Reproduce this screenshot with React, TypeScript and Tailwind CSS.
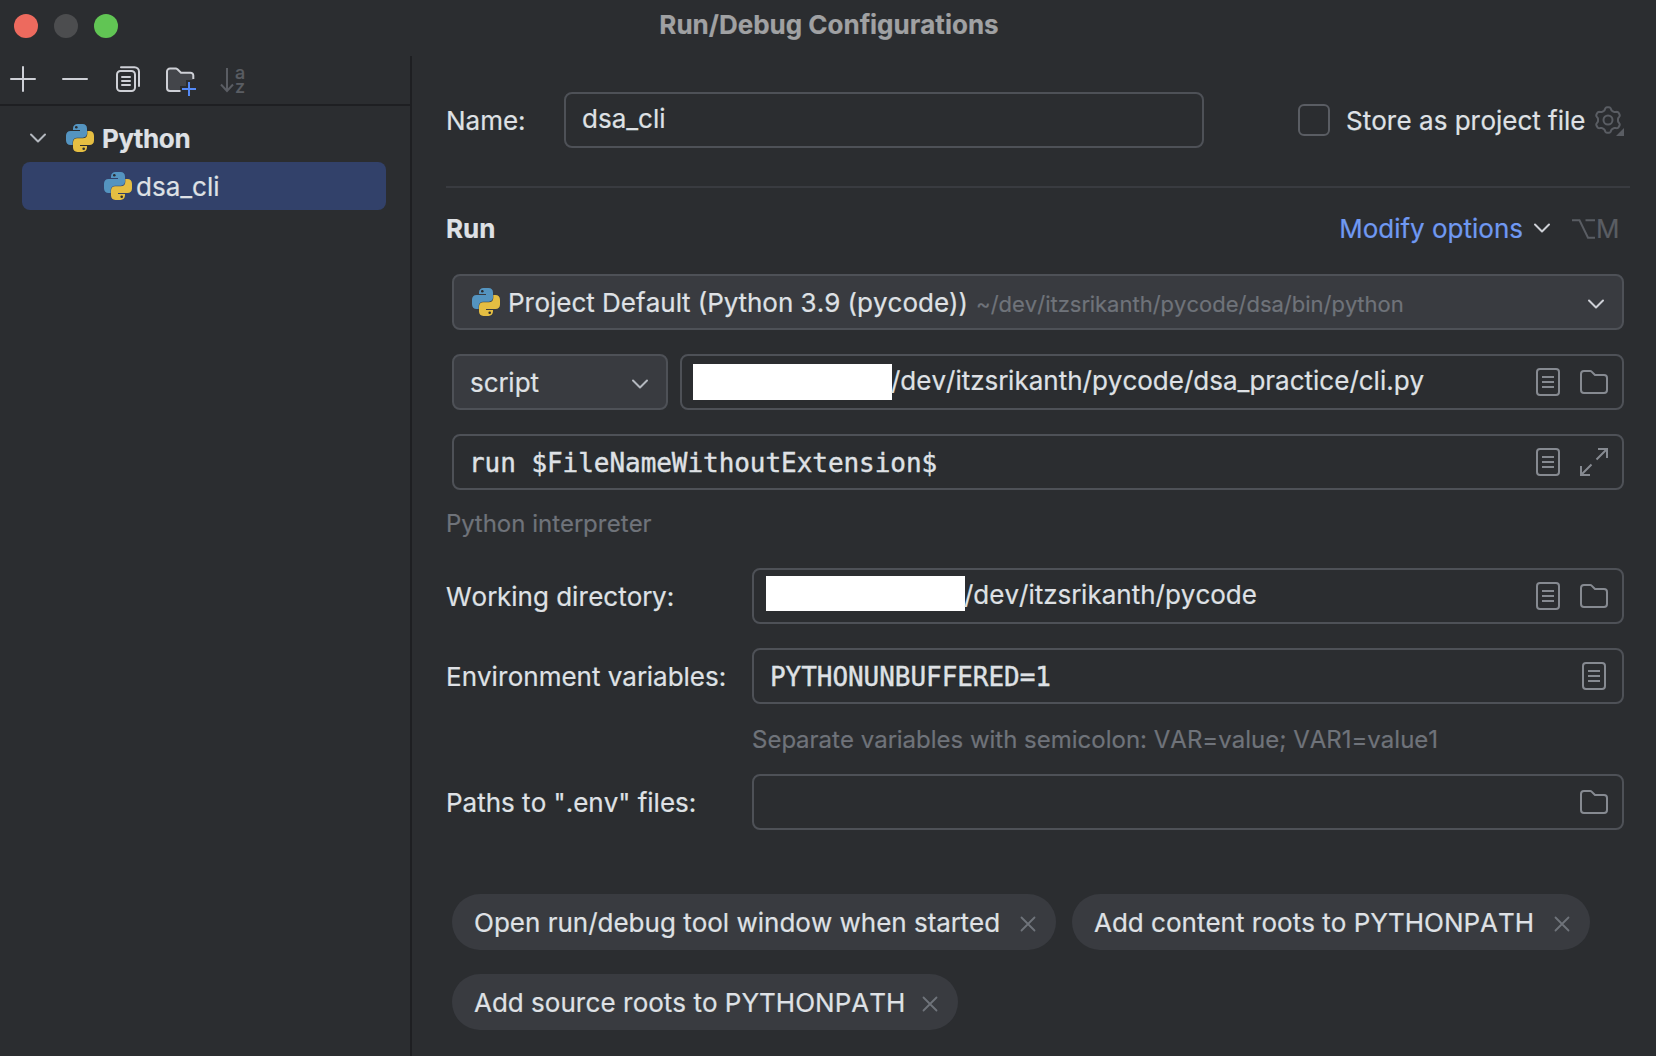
import type { ReactNode } from "react";

function PythonIcon({ className = "" }: { className?: string }) {
  const snake =
    "M7 4.4C7 1.6 9 0 11.4 0h5.2C19.2 0 21 1.8 21 4.4v5.2c0 2.5-1.8 4.1-4.2 4.1h-5.6c-2.7 0-4.5 1.8-4.5 4.4V21H4.6C1.8 21 0 19 0 16.2v-4.6C0 8.8 1.8 7 4.5 7H14V6H7z";
  return (
    <svg width="28" height="28" viewBox="0 0 28 28" className={`shrink-0 ${className}`}>
      <path d={snake} fill="#5494c0" />
      <path d={snake} fill="#e5be42" transform="rotate(180 14 14)" />
      <circle cx="10.3" cy="3.3" r="1.3" fill="#2b2d30" />
      <circle cx="17.7" cy="24.7" r="1.3" fill="#2b2d30" />
    </svg>
  );
}

function Chevron({ color = "#ced0d6", className = "" }: { color?: string; className?: string }) {
  return (
    <svg width="18" height="12" viewBox="0 0 18 12" fill="none" stroke={color} strokeWidth="2" strokeLinecap="round" strokeLinejoin="round" className={`shrink-0 ${className}`}>
      <path d="M2 2.5l7 7 7-7" />
    </svg>
  );
}

function DocIcon() {
  return (
    <svg width="24" height="28" viewBox="0 0 24 28" fill="none" stroke="#868a91" strokeWidth="2" className="shrink-0">
      <rect x="1" y="1" width="22" height="26" rx="3" />
      <path d="M6 9h12M6 14h12M6 19h12" />
    </svg>
  );
}

function FolderIcon() {
  return (
    <svg width="28" height="24" viewBox="0 0 28 24" fill="none" stroke="#868a91" strokeWidth="2" strokeLinejoin="round" className="shrink-0">
      <path d="M1 4a3 3 0 0 1 3-3h6.2a2 2 0 0 1 1.4.6L15 5h9a3 3 0 0 1 3 3v12a3 3 0 0 1-3 3H4a3 3 0 0 1-3-3z" />
    </svg>
  );
}

function ExpandIcon() {
  return (
    <svg width="28" height="28" viewBox="0 0 28 28" fill="none" stroke="#868a91" strokeWidth="2" className="shrink-0">
      <path d="M18 1h9v9M27 1L16.5 11.5M10 27H1v-9M1 27l10.5-10.5" />
    </svg>
  );
}

// Six-lobed outline, with one lobe pointing straight up.
const gearOutline = Array.from({ length: 120 }, (_, i) => {
  const a = (i / 120) * 2 * Math.PI;
  const r = 11.4 + 1.5 * Math.tanh(1.8 * Math.cos(6 * a));
  return `${(14 + r * Math.sin(a)).toFixed(2)},${(16 - r * Math.cos(a)).toFixed(2)}`;
}).join(" ");

function GearIcon() {
  return (
    <svg width="30" height="32" viewBox="0 0 30 32" fill="none" stroke="#5a5d63" strokeWidth="2" strokeLinejoin="round" className="shrink-0">
      <polygon points={gearOutline} />
      <circle cx="14" cy="16" r="4.5" />
      <path d="M30 24v8h-8z" fill="#5a5d63" stroke="none" />
    </svg>
  );
}

function CloseIcon() {
  return (
    <svg width="16" height="16" viewBox="0 0 16 16" fill="none" stroke="#6f737a" strokeWidth="1.8" strokeLinecap="round" className="mt-[2px] shrink-0">
      <path d="M1.500 1.500l13 13M14.500 1.500l-13 13" />
    </svg>
  );
}

function Field({ children, icons, className = "" }: { children?: ReactNode; icons?: ReactNode; className?: string }) {
  return (
    <div className={`flex h-14 items-center rounded-lg border-2 border-[#4e5157] ${className}`}>
      {children}
      <div className="ml-auto flex items-center gap-5">{icons}</div>
    </div>
  );
}

function Label({ children }: { children: ReactNode }) {
  return <div className="w-[306px] shrink-0 pt-[2px] whitespace-nowrap">{children}</div>;
}

function Mono({ children }: { children: ReactNode }) {
  return (
    <span className="pt-[2px] font-['DejaVu_Sans_Mono',monospace] tracking-[-0.05px] [-webkit-text-stroke:0.4px]">
      {children}
    </span>
  );
}

function Pill({ children, className = "" }: { children: ReactNode; className?: string }) {
  return (
    <div className={`flex h-14 items-center justify-between rounded-full bg-[#393b40] pt-[2px] pr-5 pl-[22px] whitespace-nowrap ${className}`}>
      <span>{children}</span>
      <CloseIcon />
    </div>
  );
}

function Sidebar() {
  return (
    <aside className="flex w-[412px] shrink-0 flex-col border-r-2 border-[#1e1f22]">
      <div className="flex h-[50px] shrink-0 items-center border-b-2 border-[#1e1f22] pl-[10px]">
        <svg width="26" height="26" viewBox="0 0 26 26" stroke="#ced0d6" strokeWidth="2" strokeLinecap="round" className="mb-[2px]">
          <path d="M13 1v24M1 13h24" />
        </svg>
        <svg width="26" height="26" viewBox="0 0 26 26" stroke="#ced0d6" strokeWidth="2" strokeLinecap="round" className="mb-[2px] ml-[26px]">
          <path d="M1 13h24" />
        </svg>
        <svg width="24" height="26" viewBox="0 0 24 26" fill="none" stroke="#ced0d6" strokeWidth="2" strokeLinecap="round" className="mb-[2px] ml-7">
          <rect x="1" y="5" width="18" height="20" rx="3.5" />
          <path d="M5 1.200h13.500a4.500 4.500 0 0 1 4.500 4.500V20M6 11h8M6 15h8M6 19h8" />
        </svg>
        <svg width="30" height="30" viewBox="0 0 30 30" fill="none" strokeWidth="2" className="mt-[3px] ml-[26px]">
          <path d="M1 4.500a3 3 0 0 1 3-3h5.800a2 2 0 0 1 1.400.6L15 5.700h9.500a2.800 2.800 0 0 1 2.800 2.800V13H20v6h-6v5H4a3 3 0 0 1-3-3z" fill="#43454a" />
          <path d="M14.500 24H4a3 3 0 0 1-3-3V4.500a3 3 0 0 1 3-3h5.800a2 2 0 0 1 1.400.6L15 5.700h9.500a2.800 2.800 0 0 1 2.800 2.800V12" stroke="#ced0d6" />
          <path d="M23 15v14M16 22h14" stroke="#548af7" />
        </svg>
        <div className="ml-6 flex items-center text-[#5a5d63]">
          <svg width="14" height="28" viewBox="0 0 14 28" fill="none" stroke="#5a5d63" strokeWidth="2">
            <path d="M7 2v23M1 18.500L7 25l6-6.500" />
          </svg>
          <div className="ml-px flex flex-col pb-px text-[18px] leading-[14px] font-medium">
            <span>a</span>
            <span>z</span>
          </div>
        </div>
      </div>
      <div className="mt-2 flex h-12 items-center pl-[29px] font-bold">
        <Chevron color="#b4b8bf" />
        <PythonIcon className="ml-[19px]" />
        <span className="ml-2 pt-[2px] tracking-[-0.35px]">Python</span>
      </div>
      <div className="ml-[22px] flex h-12 w-[364px] items-center rounded-lg bg-[#32416a] pl-[82px]">
        <PythonIcon />
        <span className="ml-1 pt-[2px]">dsa_cli</span>
      </div>
    </aside>
  );
}

export default function App() {
  return (
    <div className="flex h-[1056px] w-[1656px] flex-col overflow-hidden bg-[#2b2d30] font-['Inter',sans-serif] text-[26px] leading-8 text-[#dfe1e5] [font-kerning:none] [-webkit-text-stroke:0.2px]">
      <header className="relative flex h-14 shrink-0 items-start justify-center">
        <div className="absolute top-[14px] left-[14px] flex gap-4">
          <span className="size-6 rounded-full bg-[#ed6a5e]" />
          <span className="size-6 rounded-full bg-[#4c4d4f]" />
          <span className="size-6 rounded-full bg-[#61c554]" />
        </div>
        <h1 className="mt-[9px] ml-[2px] font-bold text-[#a0a1a3]">Run/Debug Configurations</h1>
      </header>
      <div className="flex min-h-0 flex-1">
        <Sidebar />
        <main className="flex-1 pl-[34px]">
          <section className="mt-9 flex h-14 items-center">
            <div className="w-[118px] pt-[2px]">Name:</div>
            <Field className="w-[640px] pb-[2px] pl-4">dsa_cli</Field>
            <div className="ml-[94px] size-8 rounded-md border-2 border-[#5a5d63]" />
            <span className="ml-4 pt-[2px] whitespace-nowrap">Store as project file</span>
            <div className="ml-[9px]">
              <GearIcon />
            </div>
          </section>
          <div className="mt-[38px] h-0.5 w-[1184px] bg-[#393b40]" />
          <section className="mt-[25px] flex h-8 w-[1178px] items-center">
            <h2 className="font-bold">Run</h2>
            <span className="ml-auto text-[#7099f2]">Modify options</span>
            <div className="ml-[10px] flex">
              <Chevron className="mb-[2px]" />
            </div>
            <div className="ml-[21px] flex w-[52px] items-center text-[#5a5d63]">
              <svg width="23" height="20" viewBox="0 0 23 20" fill="none" stroke="#5a5d63" strokeWidth="2" className="shrink-0">
                <path d="M0 1.200h7.500l8.500 17.600h7M13.500 1.200H23" />
              </svg>
              <span className="ml-px">M</span>
            </div>
          </section>
          <section className="mt-[29px] ml-[6px] w-[1172px]">
            <Field className="bg-[#393b40] pr-[17px] pl-[18px]" icons={<Chevron className="mt-[3px]" />}>
              <PythonIcon />
              <span className="ml-2 pt-[2px]">Project Default (Python 3.9 (pycode))</span>
              <span className="ml-2 pt-[4px] text-[22px] text-[#6f737a]">~/dev/itzsrikanth/pycode/dsa/bin/python</span>
            </Field>
            <div className="mt-6 flex gap-3">
              <Field className="w-[216px] bg-[#393b40] pr-[17px] pl-4" icons={<Chevron color="#b4b8bf" className="mt-[3px]" />}>
                <span className="pt-[2px]">script</span>
              </Field>
              <Field className="flex-1 pr-[14px] pl-[11px]" icons={<><DocIcon /><FolderIcon /></>}>
                <span className="h-9 w-[199px] bg-white" />
                <span className="-ml-px pb-[3px]">/dev/itzsrikanth/pycode/dsa_practice/cli.py</span>
              </Field>
            </div>
            <Field className="mt-6 pr-[14px] pl-[15px]" icons={<><DocIcon /><ExpandIcon /></>}>
              <Mono>run $FileNameWithoutExtension$</Mono>
            </Field>
          </section>
          <p className="mt-[18px] h-8 text-2xl leading-8 text-[#6f737a]">Python interpreter</p>
          <section className="mt-7 w-[1178px]">
            <div className="flex items-center">
              <Label>Working directory:</Label>
              <Field className="flex-1 pr-[14px] pl-3" icons={<><DocIcon /><FolderIcon /></>}>
                <span className="mb-[5px] h-[35px] w-[199px] bg-white" />
                <span className="-ml-px pb-[2px]">/dev/itzsrikanth/pycode</span>
              </Field>
            </div>
            <div className="mt-6 flex items-center">
              <Label>Environment variables:</Label>
              <Field className="flex-1 pr-4 pl-4" icons={<DocIcon />}>
                <Mono>PYTHONUNBUFFERED=1</Mono>
              </Field>
            </div>
            <p className="mt-5 ml-[306px] h-8 text-2xl leading-8 text-[#6f737a]">Separate variables with semicolon: VAR=value; VAR1=value1</p>
            <div className="mt-[18px] flex items-center">
              <Label>Paths to ".env" files:</Label>
              <Field className="flex-1 pr-[14px]" icons={<FolderIcon />} />
            </div>
          </section>
          <section className="mt-16 ml-[6px] flex flex-wrap gap-x-4 gap-y-6">
            <Pill className="w-[604px]">Open run/debug tool window when started</Pill>
            <Pill className="w-[518px]">Add content roots to PYTHONPATH</Pill>
            <Pill className="w-[506px]">Add source roots to PYTHONPATH</Pill>
          </section>
        </main>
      </div>
    </div>
  );
}
